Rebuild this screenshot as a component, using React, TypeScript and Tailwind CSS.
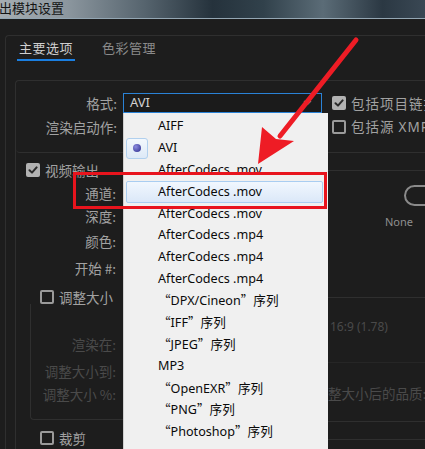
import React from "react";

const CJK = { fontFamily: '"Noto Sans CJK SC", "Noto Sans", sans-serif' };
const LAT = { fontFamily: '"Noto Sans", "Noto Sans CJK SC", sans-serif' };

function CheckBox({ checked }: { checked: boolean }) {
  if (checked) {
    return (
      <div className="w-[14px] h-[14px] rounded-[2px] bg-[#b2b2b2] flex items-center justify-center shrink-0">
        <svg width="10" height="10" viewBox="0 0 10 10">
          <path d="M1.5 5.2 L4 7.6 L8.6 2.4" stroke="#2a2a2a" strokeWidth="2" fill="none" strokeLinecap="round" strokeLinejoin="round" />
        </svg>
      </div>
    );
  }
  return <div className="w-[14px] h-[14px] rounded-[2px] border-2 border-[#9a9a9a] shrink-0" />;
}

function Label({ children, w, dim }: { children: React.ReactNode; w: string; dim?: boolean }) {
  return (
    <div
      className={`${w} shrink-0 h-[20px] flex items-center justify-end whitespace-nowrap text-[13.5px] leading-[20px] ${dim ? "text-[#4a4a4a]" : "text-[#a2a2a2]"}`}
      style={CJK}
    >
      {children}
    </div>
  );
}

const Q = ({ c }: { c: string }) => <span style={{ fontFamily: '"Noto Sans CJK SC", sans-serif' }}>{c}</span>;

const items: React.ReactNode[] = [
  "AIFF",
  "AVI",
  "AfterCodecs .mov",
  "AfterCodecs .mov",
  "AfterCodecs .mov",
  "AfterCodecs .mp4",
  "AfterCodecs .mp4",
  "AfterCodecs .mp4",
  <>
    <Q c="“" />DPX/Cineon<Q c="”" />
    <Q c="序列" />
  </>,
  <>
    <Q c="“" />IFF<Q c="”" />
    <Q c="序列" />
  </>,
  <>
    <Q c="“" />JPEG<Q c="”" />
    <Q c="序列" />
  </>,
  "MP3",
  <>
    <Q c="“" />OpenEXR<Q c="”" />
    <Q c="序列" />
  </>,
  <>
    <Q c="“" />PNG<Q c="”" />
    <Q c="序列" />
  </>,
  <>
    <Q c="“" />Photoshop<Q c="”" />
    <Q c="序列" />
  </>,
];

export default function App() {
  return (
    <div className="relative w-[425px] h-[449px] overflow-hidden bg-[#1d1d1d]" style={LAT}>
      {/* title bar */}
      <div className="h-[19px] border-b border-[#93a6b3] bg-[linear-gradient(90deg,#a6adb2_0%,#8b969e_16%,#56646e_34%,#25323c_50%,#31414b_62%,#5b6c77_76%,#2b3843_90%,#3a4854_100%)] flex items-start overflow-hidden">
        <div className="ml-[-1px] mt-[-1px] text-[13px] leading-[17px] text-[#141414] whitespace-nowrap" style={CJK}>
          出模块设置
        </div>
      </div>

      {/* outer panel */}
      <div className="ml-[5px] mt-[16px] border-l border-t border-[#2f2f2f] rounded-tl-[4px] h-[420px]">
        {/* tabs */}
        <div className="h-[44px] flex items-start pl-[11px] pt-[3px]" style={CJK}>
          <div className="flex flex-col items-stretch shrink-0">
            <div className="px-[2px] text-[13px] leading-[18px] text-[#cfcfcf] tracking-[0.5px]">主要选项</div>
            <div className="mt-[2px] h-[2px] bg-[#1a7ee0]" />
          </div>
          <div className="ml-[27px] text-[13px] leading-[18px] text-[#8a8a8a] tracking-[0.5px]">色彩管理</div>
        </div>

        {/* inner panel */}
        <div className="ml-[9px] border-l border-t border-[#2f2f2f] rounded-tl-[4px] h-[380px]">
          {/* section 1 */}
          <div className="h-[72px] border-b border-[#2f2f2f] pt-[12px] rounded-bl-[4px]">
            <div className="flex items-center h-[20px]">
              <Label w="w-[101px]">格式:</Label>
              <div className="ml-[6px] shrink-0 w-[199px] h-[20px] border border-[#2a82d6] bg-[#1b1b1b] flex items-center px-[6px] justify-between">
                <span className="text-[13px] text-[#d2d2d2]" style={LAT}>AVI</span>
                <svg width="9" height="6" viewBox="0 0 9 6" className="mr-[3px]">
                  <path d="M1 1 L4.5 4.5 L8 1" stroke="#8a8a8a" strokeWidth="1.2" fill="none" />
                </svg>
              </div>
              <div className="ml-[10px] shrink-0 flex items-center gap-[5px]">
                <CheckBox checked />
                <span className="text-[13.5px] text-[#a2a2a2] whitespace-nowrap tracking-[1px]" style={CJK}>包括项目链接</span>
              </div>
            </div>
            <div className="flex items-center h-[20px] mt-[4px]">
              <Label w="w-[101px]">渲染启动作:</Label>
              <div className="ml-[6px] shrink-0 w-[199px]" />
              <div className="ml-[10px] shrink-0 flex items-center gap-[5px]">
                <CheckBox checked={false} />
                <span className="text-[13.5px] text-[#a2a2a2] whitespace-nowrap tracking-[1px]" style={CJK}>
                  包括源 <span style={LAT}>XMP</span> 元数据
                </span>
              </div>
            </div>
          </div>

          {/* section 2 */}
          <div className="flex">
            {/* left column */}
            <div className="w-[312px] shrink-0 flex flex-col">
              <div className="pt-[10px] pl-[10px] flex items-center gap-[5px] h-[24px]">
                <CheckBox checked />
                <span className="text-[13.5px] text-[#a2a2a2]" style={CJK}>视频输出</span>
              </div>
              <div className="mt-[6px]"><Label w="w-[100px]">通道:</Label></div>
              <div className="mt-[3px]"><Label w="w-[100px]">深度:</Label></div>
              <div className="mt-[5px]"><Label w="w-[100px]">颜色:</Label></div>
              <div className="mt-[7px]"><Label w="w-[100px]">开始 #:</Label></div>
              <div className="mt-[12px] pl-[24px] flex items-center gap-[5px] h-[14px]">
                <CheckBox checked={false} />
                <span className="text-[13.5px] text-[#a2a2a2]" style={CJK}>调整大小</span>
              </div>
              <div className="ml-[14px] h-[116px] border-l border-b border-[#2f2f2f] rounded-bl-[4px] pt-[30px]">
                <Label w="w-[85px]" dim>渲染在:</Label>
                <div className="mt-[7px]"><Label w="w-[85px]" dim>调整大小到:</Label></div>
                <div className="mt-[3px]"><Label w="w-[85px]" dim>调整大小 %:</Label></div>
              </div>
              <div className="mt-[11px] pl-[24px] flex items-center gap-[5px] h-[14px]">
                <CheckBox checked={false} />
                <span className="text-[13.5px] text-[#a2a2a2]" style={CJK}>裁剪</span>
              </div>
            </div>

            {/* right column */}
            <div className="flex-1 min-w-0 flex flex-col">
              <div className="h-[17px]" />
              <div className="border-t border-[#2f2f2f] h-[127px] flex flex-col">
                <div className="mt-[14px] ml-[76px] w-[44px] shrink-0 h-[21px] rounded-full border-2 border-[#8a8a8a]" />
                <div className="mt-[9px] ml-[57px] text-[11px] leading-[14px] text-[#8f8f8f]" style={LAT}>None</div>
              </div>
              <div className="border-t border-[#2f2f2f] h-[65px] pt-[15px] pl-[2px]">
                <span className="text-[12px] text-[#4a4a4a] whitespace-nowrap" style={LAT}>16:9 (1.78)</span>
              </div>
              <div className="border-t border-[#262626] h-[59px] pt-[18px]">
                <span className="text-[13.5px] text-[#4a4a4a] whitespace-nowrap" style={CJK}>整大小后的品质:</span>
              </div>
              <div className="border-t border-[#2f2f2f] h-[18px]" />
              <div className="border-t border-[#2f2f2f]" />
            </div>
          </div>
        </div>
      </div>

      {/* dropdown list */}
      <div className="absolute left-[123px] top-[113px] w-[205px] h-[340px] bg-[#f0f0f0] border-l border-[#cfcfcf] pt-[3px]">
        {items.map((it, i) => (
          <div key={i} className="relative h-[21.8px] flex items-center">
            {i === 3 && (
              <div className="absolute left-[2px] right-[5px] top-0 bottom-0 rounded-[2px] border border-[#a9cdf1] bg-[linear-gradient(180deg,#f1f7fe,#dbe8f8)]" />
            )}
            {i === 1 && (
              <div className="absolute left-[2px] top-0 w-[22px] h-[21px] rounded-[3px] border border-[#b1d0ee] bg-[linear-gradient(180deg,#f3f8fd,#dde9f7)] flex items-center justify-center">
                <div className="w-[8px] h-[8px] rounded-full bg-[radial-gradient(circle_at_35%_35%,#8c8ce0,#2a2a8a)]" />
              </div>
            )}
            <span className="relative ml-[34px] text-[12.6px] text-[#0a0a0a] whitespace-nowrap" style={LAT}>
              {it}
            </span>
          </div>
        ))}
      </div>

      {/* red highlight box */}
      <div className="absolute left-[73px] top-[172px] w-[254px] h-[37px] border-[3px] border-[#e8141d]" />

      {/* red arrow */}
      <svg className="absolute left-0 top-0 pointer-events-none" width="425" height="449" viewBox="0 0 425 449">
        <line x1="356" y1="40" x2="280" y2="136" stroke="#ee1c25" strokeWidth="5" strokeLinecap="round" />
        <polygon points="258,164 262,127 276,139 294,141" fill="#ee1c25" />
      </svg>
    </div>
  );
}
